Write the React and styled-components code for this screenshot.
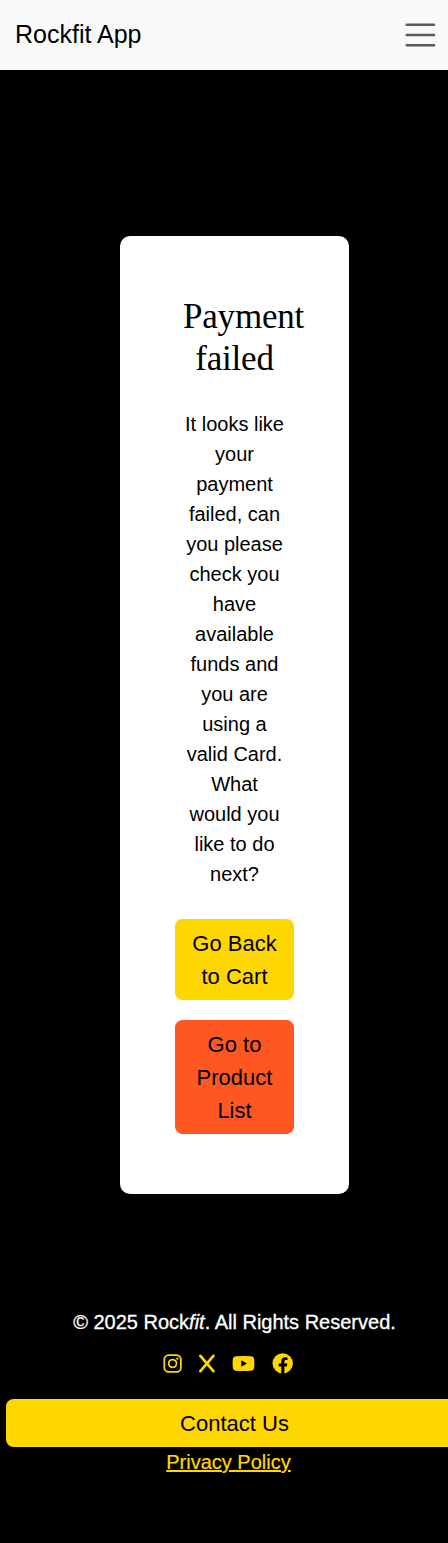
import React from 'react';
import styled, { createGlobalStyle } from 'styled-components';

const GlobalStyle = createGlobalStyle`
  *, *::before, *::after { box-sizing: border-box; }
  body {
    margin: 0;
    background: #000;
    color: #000;
    font-family: "Liberation Sans", Arial, sans-serif;
    font-size: 20px;
    line-height: 1.5;
    overflow-x: hidden;
  }
  h1, p { margin: 0; font-weight: 400; }
`;

const Page = styled.div`
  min-height: 1543px;
  display: flex;
  flex-direction: column;
  overflow: hidden;
`;

const Navbar = styled.header`
  height: 70px;
  padding: 0 12px 0 15px;
  display: flex;
  align-items: center;
  justify-content: space-between;
  background: #f8f9fa;
`;

const Brand = styled.a`
  font-size: 25px;
`;

const MenuButton = styled.button`
  display: flex;
  padding: 0;
  border: 0;
  background: none;
`;

const Main = styled.main`
  padding: 166px 0 0 120px;
`;

const Card = styled.section`
  width: 229px;
  height: 958px;
  padding: 60px 55px;
  border-radius: 10px;
  background: #fff;
  text-align: center;
`;

const Title = styled.h1`
  margin: 0 8px 29px;
  font-family: "Liberation Serif", "Times New Roman", serif;
  font-size: 35px;
  line-height: 42px;
  letter-spacing: -0.2px;
`;

const Message = styled.p`
  margin: 0 8px 30px;
`;

const Button = styled.button`
  display: block;
  width: 100%;
  margin: 0 0 ${({ $gap }) => $gap || '0'};
  padding: 7.5px 15px;
  border: 0;
  border-radius: 7.5px;
  background: ${({ $color }) => $color || '#ffd700'};
  color: #000;
  font: inherit;
  font-size: 22px;
  line-height: 33px;
  text-align: center;
`;

const Footer = styled.footer`
  width: 457px;
  margin: 113px 0 0 6px;
  display: flex;
  flex-direction: column;
  align-items: center;
  color: #fff;
`;

const Copyright = styled.p`
  -webkit-text-stroke: 0.3px currentColor;
`;

const Socials = styled.nav`
  height: 21px;
  margin: 16px 13px 25px 0;
  display: flex;
  align-items: center;
  gap: 17px;
  color: #ffd700;
  svg { display: block; }
`;

const PolicyLink = styled.a`
  margin-right: 12px;
  color: #ffd700;
  text-decoration: underline;
  -webkit-text-stroke: 0.2px currentColor;
`;

const InstagramIcon = () => (
  <svg width="19" height="21" viewBox="0 0 19 21" fill="none" stroke="currentColor">
    <rect x="1.3" y="2.2" width="16.6" height="16.6" rx="4.4" strokeWidth="1.8" />
    <circle cx="9.6" cy="10.5" r="3.9" strokeWidth="1.8" />
    <circle cx="14.4" cy="5.7" r="1.15" fill="currentColor" stroke="none" />
  </svg>
);

const XIcon = () => (
  <svg width="16" height="21" viewBox="0 0 16 21" fill="none" stroke="currentColor" strokeWidth="2.7" strokeLinecap="round">
    <path d="M1.4 2.9 14.4 18.1M14.4 2.9 1.4 18.1" />
  </svg>
);

const YoutubeIcon = () => (
  <svg width="23" height="21" viewBox="0 0 23 21">
    <path fill="currentColor" fillRule="evenodd" d="M4 3.3Q11.5 2.6 19 3.3Q21.9 3.6 22.2 6.3Q22.7 10.5 22.2 14.7Q21.9 17.4 19 17.7Q11.5 18.4 4 17.7Q1.1 17.4.8 14.7Q.3 10.5.8 6.3Q1.1 3.6 4 3.3ZM9.3 7.3V13.7L14.9 10.5Z" />
  </svg>
);

const FacebookIcon = () => (
  <svg width="21" height="21" viewBox="0 0 21 21">
    <circle cx="10.7" cy="10.4" r="10.2" fill="currentColor" />
    <path fill="#000" d="M9.3 21V13.4H6.7V10.4H9.3V8.3C9.3 5.7 10.8 4.2 13.2 4.2Q14.4 4.2 15.5 4.4V6.9H14.2C12.9 6.9 12.4 7.6 12.4 8.6V10.4H15.3L14.8 13.4H12.4V21Z" />
  </svg>
);

export default function App() {
  return (
    <>
      <GlobalStyle />
      <Page>
        <Navbar>
          <Brand>Rockfit App</Brand>
          <MenuButton aria-label="Menu">
            <svg width="31" height="26" viewBox="0 0 31 26" fill="none" stroke="#5a5b5c" strokeWidth="2.5" strokeLinecap="round">
              <path d="M1.7 2.8h27.3M1.7 13h27.3M1.7 23.2h27.3" />
            </svg>
          </MenuButton>
        </Navbar>
        <Main>
          <Card>
            <Title>Payment failed</Title>
            <Message>
              It looks like your payment failed, can you please check you have available funds and you are using a valid Card. What would you like to do next?
            </Message>
            <Button $gap="20px">Go Back to Cart</Button>
            <Button $color="#ff5722">Go to Product List</Button>
          </Card>
        </Main>
        <Footer>
          <Copyright>© 2025 Rock<em>fit</em>. All Rights Reserved.</Copyright>
          <Socials>
            <InstagramIcon />
            <XIcon />
            <YoutubeIcon />
            <FacebookIcon />
          </Socials>
          <Button>Contact Us</Button>
          <PolicyLink>Privacy Policy</PolicyLink>
        </Footer>
      </Page>
    </>
  );
}
